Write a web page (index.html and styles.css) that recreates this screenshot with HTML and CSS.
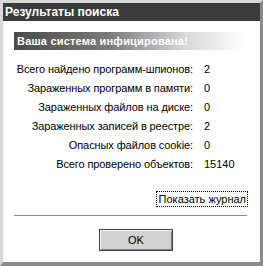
FILE: index.html
```html
<!DOCTYPE html>
<html lang="ru">
<head>
<meta charset="utf-8">
<link rel="stylesheet" href="styles.css">
</head>
<body>
<div class="window">
  <div class="titlebar">Результаты поиска</div>
  <div class="content">
    <div class="banner">Ваша система инфицирована!</div>
    <div class="stats">
      <div class="label">Всего найдено программ-шпионов:</div><div class="value">2</div>
      <div class="label">Зараженных программ в памяти:</div><div class="value">0</div>
      <div class="label">Зараженных файлов на диске:</div><div class="value">0</div>
      <div class="label">Зараженных записей в реестре:</div><div class="value">2</div>
      <div class="label">Опасных файлов cookie:</div><div class="value">0</div>
      <div class="label">Всего проверено объектов:</div><div class="value">15140</div>
    </div>
    <div class="linkrow"><a class="loglink" href="#">Показать журнал</a></div>
    <div class="separator"></div>
    <div class="buttons"><button class="ok">OK</button></div>
  </div>
</div>
</body>
</html>
```
FILE: styles.css
```css
html, body {
  margin: 0;
  padding: 0;
  background: #ffffff;
}
body {
  font-family: "Liberation Sans", Arial, sans-serif;
  font-size: 11px;
  color: #000;
}
.window {
  box-sizing: border-box;
  width: 263px;
  height: 266px;
  background: #ffffff;
  border-top: 3px solid #d8d8d8;
  border-left: 3px solid #d8d8d8;
  border-right: 3px solid #8a8a8a;
  border-bottom: 4px solid #8a8a8a;
  box-shadow: inset 1px 1px 0 #f4f4f4;
  display: flex;
  flex-direction: column;
}
.titlebar {
  height: 18px;
  line-height: 18px;
  background: #3b3b3b;
  color: #ffffff;
  font-weight: bold;
  font-size: 12px;
  padding-left: 2px;
  white-space: nowrap;
}
.content {
  padding: 11px 10px 0 11px;
  display: flex;
  flex-direction: column;
}
.banner {
  height: 18px;
  line-height: 18px;
  background: linear-gradient(to right, #4a4a4a 0%, #7a7a7a 40%, #d6d6d6 72%, #ffffff 98%);
  color: #ffffff;
  font-weight: bold;
  font-size: 11px;
  letter-spacing: 0.2px;
  padding-left: 3px;
  white-space: nowrap;
}
.stats {
  margin-top: 10px;
  display: grid;
  grid-template-columns: 179px 1fr;
  column-gap: 11px;
  grid-auto-rows: 19px;
  line-height: 19px;
  white-space: nowrap;
}
.label {
  text-align: right;
  letter-spacing: -0.1px;
}
.linkrow {
  margin-top: 17px;
  display: flex;
  justify-content: flex-end;
  padding-right: 2px;
}
.loglink {
  color: #000;
  text-decoration: none;
  border: 1px dotted #000;
  padding: 1px 1px 1px 2px;
  line-height: 12px;
  white-space: nowrap;
}
.separator {
  margin-top: 8px;
  height: 1px;
  background: #8a8a8a;
  margin-right: 3px;
}
.buttons {
  margin-top: 13px;
  padding-left: 85px;
}
.ok {
  width: 74px;
  height: 22px;
  background: #d2d2d2;
  border: 1px solid #404040;
  box-shadow: inset 1px 1px 0 #f4f4f4, inset -1px -1px 0 #808080;
  font-family: "Liberation Sans", Arial, sans-serif;
  font-size: 11px;
  color: #000;
  padding: 0;
}
```
